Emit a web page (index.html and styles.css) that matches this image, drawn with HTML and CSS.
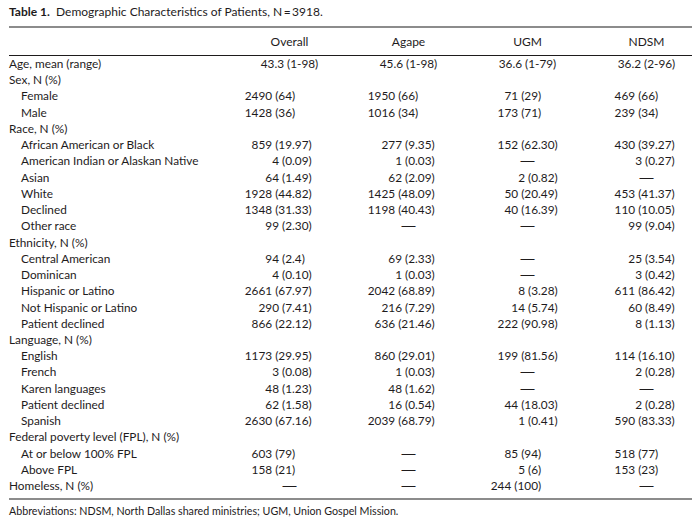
FILE: index.html
```html
<!DOCTYPE html>
<html>
<head>
<meta charset="utf-8">
<link rel="stylesheet" href="styles.css">
</head>
<body>
<div class="page">
  <div class="caption"><span class="label">Table 1.</span>&nbsp; Demographic Characteristics of Patients, N&#8201;=&#8201;3918.</div>
  <table class="data">
    <colgroup>
      <col class="c-label"><col class="c-val"><col class="c-val"><col class="c-val"><col class="c-last">
    </colgroup>
    <thead>
      <tr><th></th><th>Overall</th><th>Agape</th><th>UGM</th><th>NDSM</th></tr>
    </thead>
    <tbody>
      <tr><td>Age, mean (range)</td><td class="c">43.3 (1-98)</td><td class="c">45.6 (1-98)</td><td class="c">36.6 (1-79)</td><td class="c">36.2 (2-96)</td></tr>
      <tr><td>Sex, N (%)</td><td></td><td></td><td></td><td></td></tr>
      <tr><td class="sub">Female</td><td><span class="a">2490 (64</span><span>)</span></td><td><span class="a">1950 (66</span><span>)</span></td><td><span class="a">71 (29</span><span>)</span></td><td><span class="a">469 (66</span><span>)</span></td></tr>
      <tr><td class="sub">Male</td><td><span class="a">1428 (36</span><span>)</span></td><td><span class="a">1016 (34</span><span>)</span></td><td><span class="a">173 (71</span><span>)</span></td><td><span class="a">239 (34</span><span>)</span></td></tr>
      <tr><td>Race, N (%)</td><td></td><td></td><td></td><td></td></tr>
      <tr><td class="sub">African American or Black</td><td><span class="a">859 (19</span><span>.97)</span></td><td><span class="a">277 (9</span><span>.35)</span></td><td><span class="a">152 (62</span><span>.30)</span></td><td><span class="a">430 (39</span><span>.27)</span></td></tr>
      <tr><td class="sub">American Indian or Alaskan Native</td><td><span class="a">4 (0</span><span>.09)</span></td><td><span class="a">1 (0</span><span>.03)</span></td><td class="c"><span class="dash">—</span></td><td><span class="a">3 (0</span><span>.27)</span></td></tr>
      <tr><td class="sub">Asian</td><td><span class="a">64 (1</span><span>.49)</span></td><td><span class="a">62 (2</span><span>.09)</span></td><td><span class="a">2 (0</span><span>.82)</span></td><td class="c"><span class="dash">—</span></td></tr>
      <tr><td class="sub">White</td><td><span class="a">1928 (44</span><span>.82)</span></td><td><span class="a">1425 (48</span><span>.09)</span></td><td><span class="a">50 (20</span><span>.49)</span></td><td><span class="a">453 (41</span><span>.37)</span></td></tr>
      <tr><td class="sub">Declined</td><td><span class="a">1348 (31</span><span>.33)</span></td><td><span class="a">1198 (40</span><span>.43)</span></td><td><span class="a">40 (16</span><span>.39)</span></td><td><span class="a">110 (10</span><span>.05)</span></td></tr>
      <tr><td class="sub">Other race</td><td><span class="a">99 (2</span><span>.30)</span></td><td class="c"><span class="dash">—</span></td><td class="c"><span class="dash">—</span></td><td><span class="a">99 (9</span><span>.04)</span></td></tr>
      <tr><td>Ethnicity, N (%)</td><td></td><td></td><td></td><td></td></tr>
      <tr><td class="sub">Central American</td><td><span class="a">94 (2</span><span>.4)</span></td><td><span class="a">69 (2</span><span>.33)</span></td><td class="c"><span class="dash">—</span></td><td><span class="a">25 (3</span><span>.54)</span></td></tr>
      <tr><td class="sub">Dominican</td><td><span class="a">4 (0</span><span>.10)</span></td><td><span class="a">1 (0</span><span>.03)</span></td><td class="c"><span class="dash">—</span></td><td><span class="a">3 (0</span><span>.42)</span></td></tr>
      <tr><td class="sub">Hispanic or Latino</td><td><span class="a">2661 (67</span><span>.97)</span></td><td><span class="a">2042 (68</span><span>.89)</span></td><td><span class="a">8 (3</span><span>.28)</span></td><td><span class="a">611 (86</span><span>.42)</span></td></tr>
      <tr><td class="sub">Not Hispanic or Latino</td><td><span class="a">290 (7</span><span>.41)</span></td><td><span class="a">216 (7</span><span>.29)</span></td><td><span class="a">14 (5</span><span>.74)</span></td><td><span class="a">60 (8</span><span>.49)</span></td></tr>
      <tr><td class="sub">Patient declined</td><td><span class="a">866 (22</span><span>.12)</span></td><td><span class="a">636 (21</span><span>.46)</span></td><td><span class="a">222 (90</span><span>.98)</span></td><td><span class="a">8 (1</span><span>.13)</span></td></tr>
      <tr><td>Language, N (%)</td><td></td><td></td><td></td><td></td></tr>
      <tr><td class="sub">English</td><td><span class="a">1173 (29</span><span>.95)</span></td><td><span class="a">860 (29</span><span>.01)</span></td><td><span class="a">199 (81</span><span>.56)</span></td><td><span class="a">114 (16</span><span>.10)</span></td></tr>
      <tr><td class="sub">French</td><td><span class="a">3 (0</span><span>.08)</span></td><td><span class="a">1 (0</span><span>.03)</span></td><td class="c"><span class="dash">—</span></td><td><span class="a">2 (0</span><span>.28)</span></td></tr>
      <tr><td class="sub">Karen languages</td><td><span class="a">48 (1</span><span>.23)</span></td><td><span class="a">48 (1</span><span>.62)</span></td><td class="c"><span class="dash">—</span></td><td class="c"><span class="dash">—</span></td></tr>
      <tr><td class="sub">Patient declined</td><td><span class="a">62 (1</span><span>.58)</span></td><td><span class="a">16 (0</span><span>.54)</span></td><td><span class="a">44 (18</span><span>.03)</span></td><td><span class="a">2 (0</span><span>.28)</span></td></tr>
      <tr><td class="sub">Spanish</td><td><span class="a">2630 (67</span><span>.16)</span></td><td><span class="a">2039 (68</span><span>.79)</span></td><td><span class="a">1 (0</span><span>.41)</span></td><td><span class="a">590 (83</span><span>.33)</span></td></tr>
      <tr><td>Federal poverty level (FPL), N (%)</td><td></td><td></td><td></td><td></td></tr>
      <tr><td class="sub">At or below 100% FPL</td><td><span class="a">603 (79</span><span>)</span></td><td class="c"><span class="dash">—</span></td><td><span class="a">85 (94</span><span>)</span></td><td><span class="a">518 (77</span><span>)</span></td></tr>
      <tr><td class="sub">Above FPL</td><td><span class="a">158 (21</span><span>)</span></td><td class="c"><span class="dash">—</span></td><td><span class="a">5 (6</span><span>)</span></td><td><span class="a">153 (23</span><span>)</span></td></tr>
      <tr class="end"><td>Homeless, N (%)</td><td class="c"><span class="dash">—</span></td><td class="c"><span class="dash">—</span></td><td><span class="a">244 (100</span><span>)</span></td><td class="c"><span class="dash">—</span></td></tr>
    </tbody>
  </table>
  <div class="foot">Abbreviations: NDSM, North Dallas shared ministries; UGM, Union Gospel Mission.</div>
</div>
</body>
</html>
```

FILE: styles.css
```css
html, body {
  margin: 0;
  padding: 0;
  background: #ffffff;
}
body {
  font-family: "Lato", "Liberation Sans", sans-serif;
  color: #1e1b1c;
}
.page {
  padding: 4px 8px 0 9px;
}
.caption {
  font-size: 12px;
  line-height: 16px;
  padding-bottom: 6px;
  border-bottom: 2px solid #8c8c8c;
  width: 683px;
}
.caption .label {
  font-weight: 700;
}
.data {
  border-collapse: collapse;
  width: 683px;
  table-layout: fixed;
  font-size: 11.8px;
}
.c-label { width: 221px; }
.c-val { width: 119px; }
.c-last { width: 105px; }
.data th {
  font-weight: 400;
  font-size: 12px;
  text-align: center;
  padding: 6px 0 5px 0;
  line-height: 16px;
  border-bottom: 1px solid #1e1b1c;
}
.data th:nth-child(5) {
  padding-left: 14px;
}
.data td {
  padding: 0;
  height: 16.23px;
  line-height: 16.23px;
  text-align: left;
  white-space: nowrap;
  vertical-align: middle;
}
.data td.sub {
  padding-left: 12px;
}
.data td.c {
  text-align: center;
}
.data td.c:nth-child(5) {
  padding-left: 14px;
}
.a {
  display: inline-block;
  text-align: right;
  vertical-align: top;
}
.data td:nth-child(2) .a { width: 62px; }
.data td:nth-child(3) .a { width: 66px; }
.data td:nth-child(4) .a { width: 70px; }
.data td:nth-child(5) .a { width: 68px; }
.dash {
  font-family: "Liberation Sans", sans-serif;
  font-size: 14px;
  line-height: 0;
}
.data tr.end td {
  padding-bottom: 4px;
  border-bottom: 2px solid #8c8c8c;
}
.foot {
  font-size: 10.7px;
  line-height: 14px;
  padding-top: 4px;
}
```
